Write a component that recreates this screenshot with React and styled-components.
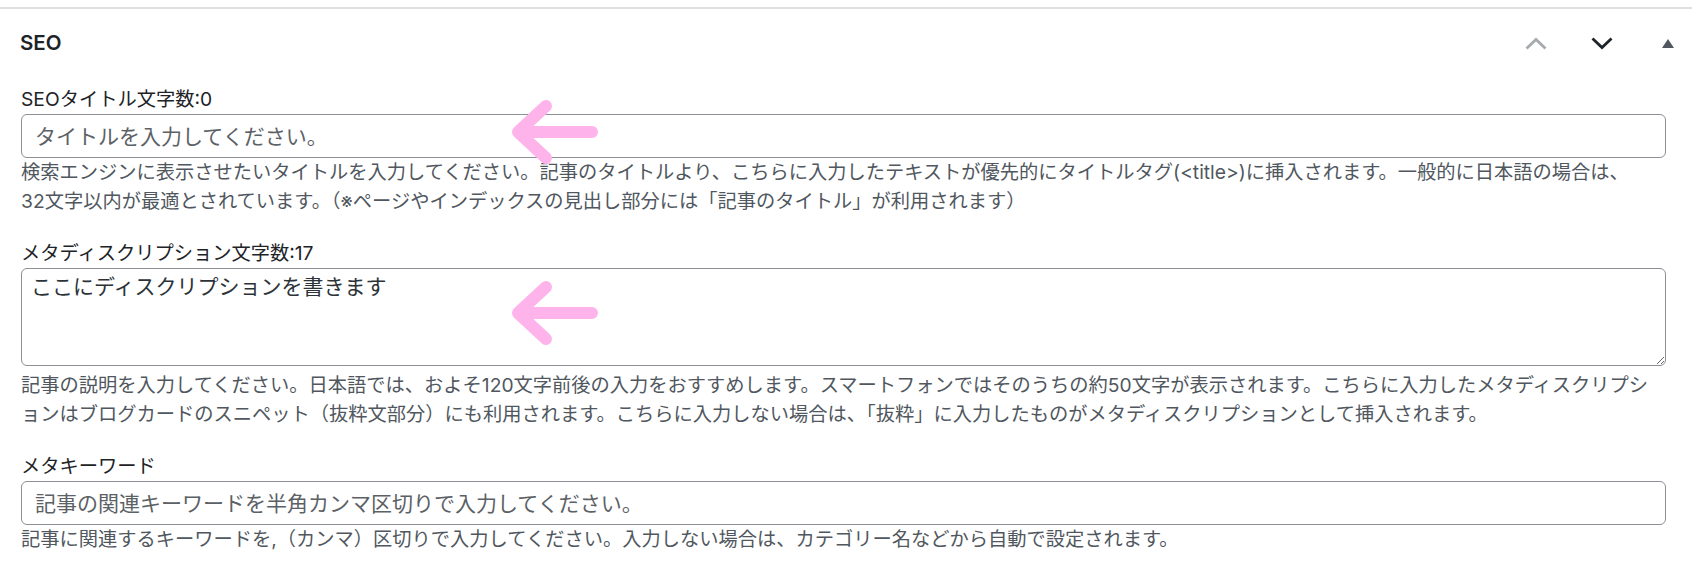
import React from 'react';
import styled, { createGlobalStyle } from 'styled-components';

const GlobalStyle = createGlobalStyle`
  html, body {
    margin: 0;
    background: #fff;
  }
  body {
    font-family: Inter, "Noto Sans CJK JP", sans-serif;
    color: #1d2327;
    -webkit-font-smoothing: antialiased;
  }
`;

const Page = styled.div`
  padding-top: 7px;
`;

const Postbox = styled.section`
  width: calc(100% - 8px);
  border-top: 2px solid #e0e0e0;
`;

const Header = styled.div`
  display: flex;
  align-items: center;
  height: 68px;
  padding-left: 20px;
`;

const Title = styled.h2`
  flex: 1;
  margin: 0;
  font-size: 20.5px;
  font-weight: 600;
  line-height: 1.4;
  color: #1d2327;
`;

const HandleActions = styled.div`
  display: flex;
  gap: 18px;
`;

const HandleButton = styled.button`
  display: flex;
  align-items: center;
  justify-content: center;
  width: 48px;
  height: 48px;
  padding: 0;
  border: 0;
  background: none;
  color: ${p => (p.$muted ? '#a7aaad' : '#1d2327')};
  cursor: ${p => (p.$muted ? 'default' : 'pointer')};
`;

const Inside = styled.div`
  padding: 8px 26px 20px 21px;
`;

const Field = styled.div`
  margin-bottom: 23px;

  &:last-child {
    margin-bottom: 0;
  }
`;

const Label = styled.label`
  display: block;
  font-size: 19.25px;
  line-height: 29px;
  color: #1d2327;
`;

const Control = styled.div`
  position: relative;
`;

const TextInput = styled.input`
  display: block;
  box-sizing: border-box;
  width: 100%;
  height: 44px;
  margin: 0;
  padding: 0 13px;
  border: 1.5px solid #8c8f94;
  border-radius: 6px;
  background: #fff;
  font-family: inherit;
  font-size: 21px;
  color: #2c3338;
  outline: none;

  &::placeholder {
    color: #5c6166;
    opacity: 1;
  }
`;

const TextArea = styled.textarea`
  display: block;
  box-sizing: border-box;
  width: 100%;
  height: 98px;
  margin: 0;
  padding: 3px 9px;
  border: 1.5px solid #8c8f94;
  border-radius: 6px;
  background: #fff;
  font-family: inherit;
  font-size: 21px;
  line-height: 1.42857;
  color: #2c3338;
  resize: vertical;
  outline: none;
`;

const Description = styled.p`
  margin: ${p => p.$gap || 0}px 0 0;
  font-size: 19.25px;
  line-height: 29px;
  color: #50575e;
  line-break: loose;
`;

// keeps a number together with the counter word after it
const Nowrap = styled.span`
  white-space: nowrap;
`;

// pink pointer drawn over the field it points at
const Pointer = styled.svg`
  position: absolute;
  left: 479px;
  top: ${p => p.$top}px;
  pointer-events: none;
`;

const ChevronUp = () => (
  <svg width="22" height="13" viewBox="0 0 22 13" fill="none">
    <polyline points="1.5,11.5 11,2.5 20.5,11.5" stroke="currentColor" strokeWidth="2.8" />
  </svg>
);

const ChevronDown = () => (
  <svg width="22" height="13" viewBox="0 0 22 13" fill="none">
    <polyline points="1.5,1.5 11,10.5 20.5,1.5" stroke="currentColor" strokeWidth="2.8" />
  </svg>
);

const Caret = () => (
  <svg width="12" height="9" viewBox="0 0 12 9">
    <polygon points="0,9 6,0 12,9" fill="#50575e" />
  </svg>
);

const Arrow = ({ top }) => (
  <Pointer $top={top} width="110" height="85" viewBox="0 0 110 85">
    <path
      d="M92 42 H18 M46 16 L18 42 L46 68"
      fill="none"
      stroke="#ffb3eb"
      strokeWidth="12"
      strokeLinecap="round"
      strokeLinejoin="round"
    />
  </Pointer>
);

export default function App() {
  const [title, setTitle] = React.useState('');
  const [description, setDescription] = React.useState('ここにディスクリプションを書きます');
  const [keywords, setKeywords] = React.useState('');

  return (
    <Page>
      <GlobalStyle />
      <Postbox>
        <Header>
          <Title>SEO</Title>
          <HandleActions>
            <HandleButton $muted aria-label="上へ移動">
              <ChevronUp />
            </HandleButton>
            <HandleButton aria-label="下へ移動">
              <ChevronDown />
            </HandleButton>
            <HandleButton aria-label="パネルを切り替え">
              <Caret />
            </HandleButton>
          </HandleActions>
        </Header>

        <Inside>
          <Field>
            <Label htmlFor="seo-title">SEOタイトル文字数:{title.length}</Label>
            <Control>
              <TextInput
                id="seo-title"
                value={title}
                onChange={e => setTitle(e.target.value)}
                placeholder="タイトルを入力してください。"
              />
              <Arrow top={-24} />
            </Control>
            <Description>
              検索エンジンに表示させたいタイトルを入力してください。記事のタイトルより、こちらに入力したテキストが優先的にタイトルタグ(&lt;title&gt;)に挿入されます。一般的に日本語の場合は、<Nowrap>32文字</Nowrap>以内が最適とされています。（※ページやインデックスの見出し部分には「記事のタイトル」が利用されます）
            </Description>
          </Field>

          <Field>
            <Label htmlFor="seo-description">メタディスクリプション文字数:{description.length}</Label>
            <Control>
              <TextArea
                id="seo-description"
                value={description}
                onChange={e => setDescription(e.target.value)}
              />
              <Arrow top={3} />
            </Control>
            <Description $gap={5}>
              記事の説明を入力してください。日本語では、およそ120文字前後の入力をおすすめします。スマートフォンではそのうちの約50文字が表示されます。こちらに入力したメタディスクリプションはブログカードのスニペット（抜粋文部分）にも利用されます。こちらに入力しない場合は、「抜粋」に入力したものがメタディスクリプションとして挿入されます。
            </Description>
          </Field>

          <Field>
            <Label htmlFor="seo-keywords">メタキーワード</Label>
            <TextInput
              id="seo-keywords"
              value={keywords}
              onChange={e => setKeywords(e.target.value)}
              placeholder="記事の関連キーワードを半角カンマ区切りで入力してください。"
            />
            <Description>
              記事に関連するキーワードを,（カンマ）区切りで入力してください。入力しない場合は、カテゴリー名などから自動で設定されます。
            </Description>
          </Field>
        </Inside>
      </Postbox>
    </Page>
  );
}
